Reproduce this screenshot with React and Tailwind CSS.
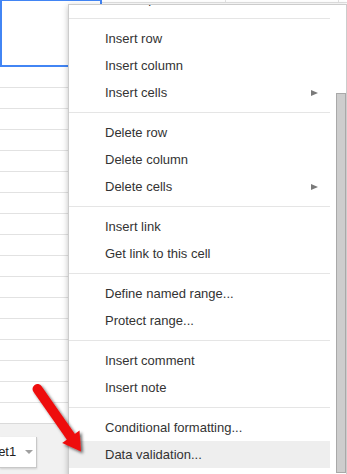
import React from "react";

const Arrow = () => (
  <svg width="7" height="6" viewBox="0 0 7 6" className="block">
    <polygon points="0,0 7,3 0,6" fill="#7a7a7a" />
  </svg>
);

const Item = ({ label, sub, active }) => (
  <div
    className={
      "h-[27px] flex items-center justify-between pl-[36px] pr-[12px] text-[13px] text-[#333333] whitespace-nowrap " +
      (active ? "bg-[#eeeeee]" : "")
    }
  >
    <span>{label}</span>
    {sub && <Arrow />}
  </div>
);

const Sep = () => <div className="my-[6px] h-px bg-[#e5e5e5]" />;

export default function App() {
  const rows = Array.from({ length: 16 });
  return (
    <div
      className="relative w-[347px] h-[474px] overflow-hidden bg-white"
      style={{ fontFamily: '"Liberation Sans", Arial, sans-serif' }}
    >
      {/* spreadsheet grid */}
      <div className="flex flex-col h-full">
        <div className="flex h-[67px]">
          <div className="w-[102px] h-[68px] -mt-px border-2 border-[#4285f4] bg-white" />
          <div className="flex-1 flex h-[3px] border-b border-[#e2e2e2]">
            <div className="w-[124px] border-r border-[#e2e2e2]" />
            <div className="w-[113px] border-r border-[#e2e2e2]" />
          </div>
        </div>
        {rows.map((_, i) => (
          <div key={i} className="h-[21px] shrink-0 border-b border-[#e2e2e2]" />
        ))}
        <div className="h-[20px] shrink-0" />
        <div className="flex-1 bg-[#f1f1f1] border-t border-[#dadada] flex items-start">
          <div className="mt-[13px] h-[31px] w-[37px] bg-white border border-l-0 border-t-0 border-[#c8c8c8] shadow-[0_1px_2px_rgba(0,0,0,0.15)] flex items-center overflow-hidden">
            <span className="ml-[-25px] text-[13px] text-[#222] whitespace-nowrap">Sheet1</span>
            <svg width="8" height="4" viewBox="0 0 8 4" className="block ml-[9px]">
              <polygon points="0,0 8,0 4,4" fill="#a0a0a0" />
            </svg>
          </div>
        </div>
      </div>

      {/* context menu */}
      <div className="absolute left-[68px] top-[4px] w-[279px] h-[472px] bg-white border border-[#cccccc] shadow-[0_2px_6px_rgba(0,0,0,0.25)] overflow-hidden flex">
        <div className="w-[261px] -mt-[20px] flex flex-col">
          <Item label="Paste special" />
          <Sep />
          <Item label="Insert row" />
          <Item label="Insert column" />
          <Item label="Insert cells" sub />
          <Sep />
          <Item label="Delete row" />
          <Item label="Delete column" />
          <Item label="Delete cells" sub />
          <Sep />
          <Item label="Insert link" />
          <Item label="Get link to this cell" />
          <Sep />
          <Item label="Define named range..." />
          <Item label="Protect range..." />
          <Sep />
          <Item label="Insert comment" />
          <Item label="Insert note" />
          <Sep />
          <Item label="Conditional formatting..." />
          <Item label="Data validation..." active />
        </div>
        <div className="flex-1 flex justify-end pt-[88px]">
          <div className="w-[10px] h-[380px] bg-[#cdcdcd] border border-[#a9a9a9]" />
        </div>
      </div>

      {/* red annotation arrow */}
      <svg className="absolute inset-0 pointer-events-none" width="347" height="474" viewBox="0 0 347 474">
        <defs>
          <filter id="sh" x="-50%" y="-50%" width="200%" height="200%">
            <feDropShadow dx="2" dy="2" stdDeviation="1.6" floodColor="#000" floodOpacity="0.6" />
          </filter>
        </defs>
        <g filter="url(#sh)">
          <line x1="37.5" y1="389" x2="71" y2="437" stroke="#ee1111" strokeWidth="10" strokeLinecap="round" />
          <polygon points="79.5,430.6 62.2,443 81,451.5" fill="#ee1111" />
        </g>
      </svg>
    </div>
  );
}
